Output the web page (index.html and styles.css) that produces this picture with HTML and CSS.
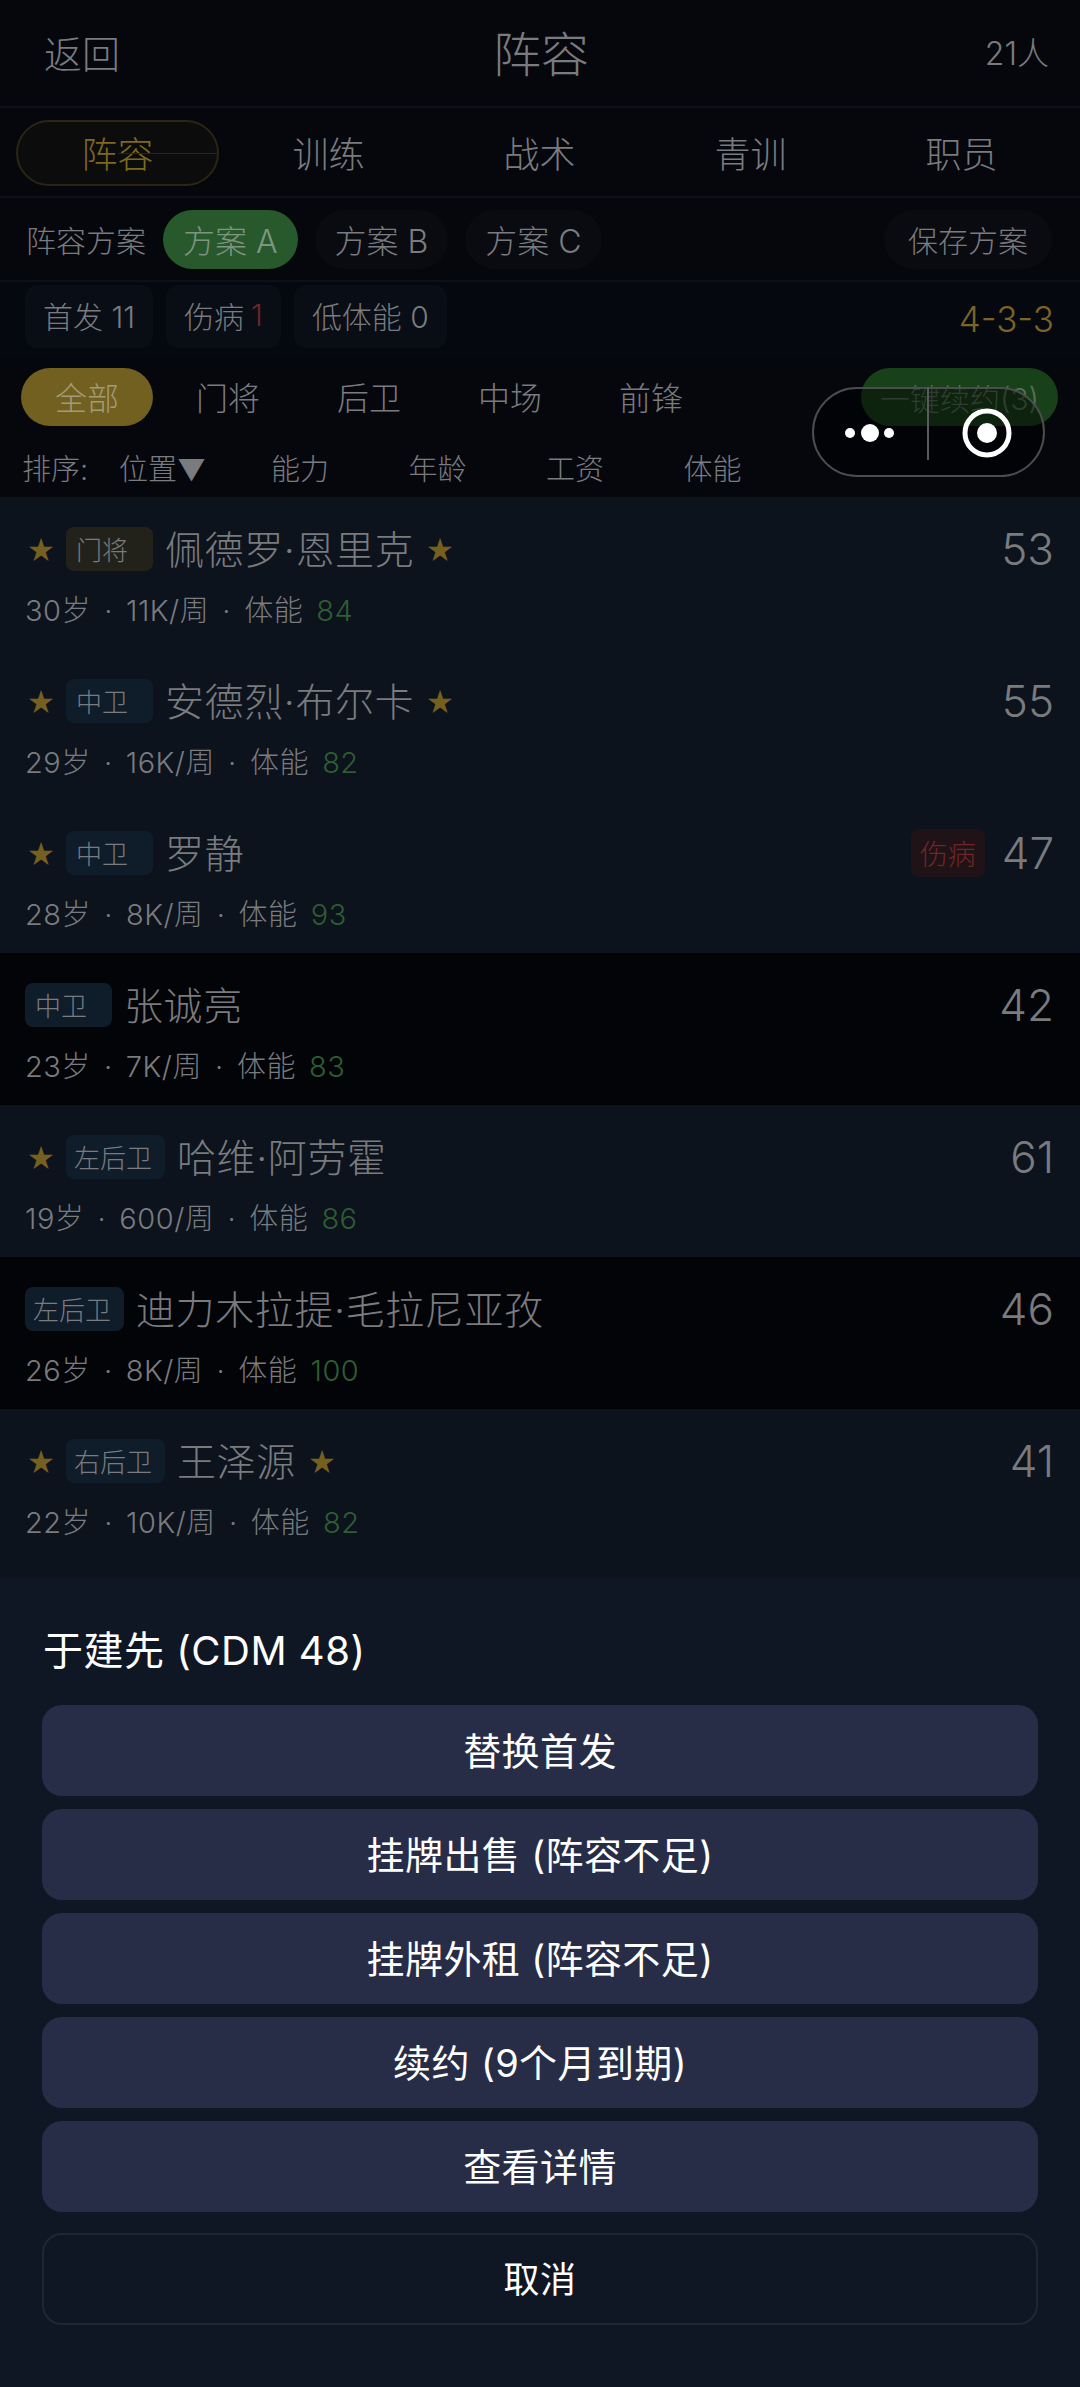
FILE: index.html
```html
<!DOCTYPE html>
<html lang="zh-CN">
<head>
  <meta charset="UTF-8" />
  <meta name="viewport" content="width=device-width, initial-scale=1.0"/>
  <title>阵容</title>
  <link rel="stylesheet" href="styles.css">
</head>
<body>
<div class="page">

  <header class="topbar">
    <span class="back">返回</span>
    <span class="title">阵容</span>
    <span class="count">21人</span>
  </header>

  <nav class="tabs">
    <span class="tab active">阵容</span>
    <span class="tab">训练</span>
    <span class="tab">战术</span>
    <span class="tab">青训</span>
    <span class="tab">职员</span>
  </nav>

  <div class="plans">
    <span class="plans-label">阵容方案</span>
    <span class="plan selected">方案 A</span>
    <span class="plan">方案 B</span>
    <span class="plan">方案 C</span>
    <span class="plan save">保存方案</span>
  </div>

  <div class="stats">
    <span class="chip">首发 11</span>
    <span class="chip">伤病 <em class="red">1</em></span>
    <span class="chip">低体能 0</span>
    <span class="formation">4-3-3</span>
  </div>

  <div class="filters">
    <span class="filter active">全部</span>
    <span class="filter">门将</span>
    <span class="filter">后卫</span>
    <span class="filter">中场</span>
    <span class="filter">前锋</span>
    <span class="renew">一键续约(3)</span>
  </div>

  <div class="sorts">
    <span class="sort-label">排序:</span>
    <span class="sort">位置▼</span>
    <span class="sort">能力</span>
    <span class="sort">年龄</span>
    <span class="sort">工资</span>
    <span class="sort">体能</span>
  </div>

  <section class="list">
    <div class="row starter">
      <div class="line">
        <span class="star">★</span><span class="pos gk">门将</span><span class="name">佩德罗·恩里克</span><span class="star after">★</span>
        <span class="rating">53</span>
      </div>
      <div class="meta">30岁 · 11K/周 · 体能 <em>84</em></div>
    </div>
    <div class="row starter">
      <div class="line">
        <span class="star">★</span><span class="pos">中卫</span><span class="name">安德烈·布尔卡</span><span class="star after">★</span>
        <span class="rating">55</span>
      </div>
      <div class="meta">29岁 · 16K/周 · 体能 <em>82</em></div>
    </div>
    <div class="row starter">
      <div class="line">
        <span class="star">★</span><span class="pos">中卫</span><span class="name">罗静</span>
        <span class="injury">伤病</span><span class="rating near">47</span>
      </div>
      <div class="meta">28岁 · 8K/周 · 体能 <em>93</em></div>
    </div>
    <div class="row">
      <div class="line">
        <span class="pos">中卫</span><span class="name">张诚亮</span>
        <span class="rating">42</span>
      </div>
      <div class="meta">23岁 · 7K/周 · 体能 <em>83</em></div>
    </div>
    <div class="row starter">
      <div class="line">
        <span class="star">★</span><span class="pos wide">左后卫</span><span class="name">哈维·阿劳霍</span>
        <span class="rating">61</span>
      </div>
      <div class="meta">19岁 · 600/周 · 体能 <em>86</em></div>
    </div>
    <div class="row">
      <div class="line">
        <span class="pos wide">左后卫</span><span class="name">迪力木拉提·毛拉尼亚孜</span>
        <span class="rating">46</span>
      </div>
      <div class="meta">26岁 · 8K/周 · 体能 <em>100</em></div>
    </div>
    <div class="row starter">
      <div class="line">
        <span class="star">★</span><span class="pos wide">右后卫</span><span class="name">王泽源</span><span class="star after">★</span>
        <span class="rating">41</span>
      </div>
      <div class="meta">22岁 · 10K/周 · 体能 <em>82</em></div>
    </div>
    <div class="row starter"></div>
  </section>

  <div class="sheet">
    <div class="sheet-title">于建先 (CDM 48)</div>
    <div class="action">替换首发</div>
    <div class="action">挂牌出售 (阵容不足)</div>
    <div class="action">挂牌外租 (阵容不足)</div>
    <div class="action">续约 (9个月到期)</div>
    <div class="action">查看详情</div>
    <div class="action cancel">取消</div>
  </div>

  <div class="capsule">
    <svg class="capsule-icon" width="233" height="90" viewBox="0 0 233 90">
      <circle cx="38" cy="46" r="5" fill="#fff"/>
      <circle cx="58" cy="46" r="9" fill="#fff"/>
      <circle cx="77" cy="46" r="5" fill="#fff"/>
      <rect x="115" y="0" width="2" height="73" fill="#5a5a5c"/>
      <circle cx="175" cy="46" r="22" fill="none" stroke="#fff" stroke-width="5"/>
      <circle cx="175" cy="46" r="10" fill="#fff"/>
    </svg>
  </div>

</div>
</body>
</html>
```

FILE: styles.css
```css
* {
  box-sizing: border-box;
}
body {
  margin: 0;
  background: #05070d;
  font-family: Inter, "Noto Sans CJK SC", sans-serif;
  font-weight: 300;
  color: #7a7b7f;
}
em {
  font-style: normal;
}
.page {
  position: relative;
  width: 1080px;
  height: 2387px;
  overflow: hidden;
}

.topbar {
  height: 108px;
  padding: 0 31px 4px 44px;
  display: grid;
  grid-template-columns: 1fr auto 1fr;
  align-items: center;
  border-bottom: 2px solid #0c1019;
}
.back {
  font-size: 38px;
}
.title {
  margin-right: 11px;
  font-size: 48px;
}
.count {
  font-size: 32px;
  text-align: right;
}

.tabs {
  height: 90px;
  padding: 12px 16px 10px;
  display: flex;
  gap: 8px;
  border-bottom: 2px solid #0c1019;
}
.tab {
  flex: none;
  width: 203px;
  padding-bottom: 2px;
  display: flex;
  align-items: center;
  justify-content: center;
  font-size: 36px;
  border-radius: 34px;
}
.tab.active {
  position: relative;
  color: #7d6821;
  background: #0c0c0c;
  border: 2px solid #2b2613;
}
.tab.active::after {
  content: "";
  position: absolute;
  left: 50%;
  right: 0;
  top: 50%;
  height: 1px;
  background: #2b2613;
}

.plans {
  height: 84px;
  padding: 0 28px 0 26px;
  display: flex;
  align-items: center;
  gap: 17px;
  border-bottom: 2px solid #0c1019;
}
.plans-label {
  font-size: 30px;
}
.plan {
  height: 59px;
  padding: 0 20px;
  display: flex;
  align-items: center;
  font-size: 32px;
  background: #090b10;
  border-radius: 30px;
}
.plan.selected {
  background: #28592d;
  color: #7f9581;
}
.plan.save {
  margin-left: auto;
  font-size: 30px;
  padding: 0 24px;
}

.stats {
  height: 76px;
  padding: 1px 26px 9px 25px;
  display: flex;
  align-items: center;
  gap: 13px;
  background: #05080f;
}
.chip {
  height: 63px;
  padding: 0 18px 2px;
  display: flex;
  align-items: center;
  gap: 7px;
  font-size: 30px;
  background: #090d15;
  border-radius: 12px;
}
.red {
  color: #6f2626;
}
.formation {
  margin-left: auto;
  margin-top: 6px;
  font-size: 35px;
  color: #7a6428;
}

.filters {
  height: 78px;
  padding: 10px 22px 0 21px;
  display: flex;
  gap: 9px;
  background: #05070d;
}
.filter {
  width: 132px;
  height: 58px;
  padding-bottom: 2px;
  display: flex;
  align-items: center;
  justify-content: center;
  font-size: 32px;
  border-radius: 29px;
}
.filter.active {
  background: #71601f;
  color: #a39a78;
}
.renew {
  margin-left: auto;
  width: 197px;
  height: 58px;
  display: flex;
  align-items: center;
  justify-content: center;
  font-size: 30px;
  white-space: nowrap;
  background: #184019;
  color: #55705a;
  border-radius: 29px;
}

.sorts {
  height: 61px;
  padding: 0 0 0 22px;
  display: flex;
  align-items: center;
  gap: 7.5px;
  font-size: 29px;
}
.sort-label {
  width: 68px;
}
.sort {
  width: 130px;
  text-align: center;
}

.row {
  height: 152px;
  padding: 30px 26px 0 25px;
  background: #030408;
}
.row.starter {
  background: #0c131d;
}
.line {
  height: 44px;
  display: flex;
  align-items: center;
}
.star {
  width: 41px;
  padding: 0 0 4px 3px;
  font-size: 26px;
  color: #76601f;
  font-family: "DejaVu Sans", sans-serif;
}
.star.after {
  width: 30px;
  margin-left: 10px;
}
.pos {
  height: 44px;
  width: 87px;
  padding: 0 0 2px 10px;
  display: flex;
  align-items: center;
  font-size: 26px;
  background: #0f1d2b;
  border-radius: 8px;
}
.pos.wide {
  width: 99px;
  padding-left: 8px;
}
.pos.gk {
  background: #23221a;
}
.name {
  margin: 0 0 4px 12px;
  font-size: 39px;
  letter-spacing: 0.6px;
}
.rating {
  margin-left: auto;
  font-size: 44px;
}
.rating.near {
  margin-left: 17px;
}
.injury {
  margin-left: auto;
  width: 74px;
  height: 48px;
  display: flex;
  align-items: center;
  justify-content: center;
  font-size: 28px;
  color: #6f2626;
  background: #1f1317;
  border-radius: 8px;
}
.meta {
  margin-top: 16px;
  font-size: 29px;
  letter-spacing: 0.5px;
  word-spacing: 4.5px;
}
.meta em {
  color: #2c5e32;
}

.sheet {
  position: absolute;
  left: 0;
  right: 0;
  top: 1578px;
  bottom: 0;
  padding: 45px 42px 0;
  display: flex;
  flex-direction: column;
  gap: 13px;
  font-weight: 400;
  background: #101724;
}
.sheet-title {
  height: 69px;
  padding-left: 1px;
  font-size: 40px;
  line-height: 56px;
  letter-spacing: 0.5px;
  color: #fff;
}
.action {
  height: 91px;
  flex: none;
  padding-bottom: 4px;
  display: flex;
  align-items: center;
  justify-content: center;
  font-size: 38px;
  letter-spacing: 0.4px;
  color: #fff;
  background: #272d47;
  border-radius: 20px;
}
.action.cancel {
  height: 92px;
  margin-top: 8px;
  font-size: 36px;
  background: none;
  border: 2px solid #1f2638;
}

.capsule {
  position: absolute;
  left: 812px;
  top: 387px;
  width: 233px;
  height: 90px;
  border: 2px solid #4c4c4e;
  border-radius: 45px;
  background: rgba(0, 0, 0, 0.45);
}
.capsule-icon {
  position: absolute;
  left: -2px;
  top: -2px;
}
```
